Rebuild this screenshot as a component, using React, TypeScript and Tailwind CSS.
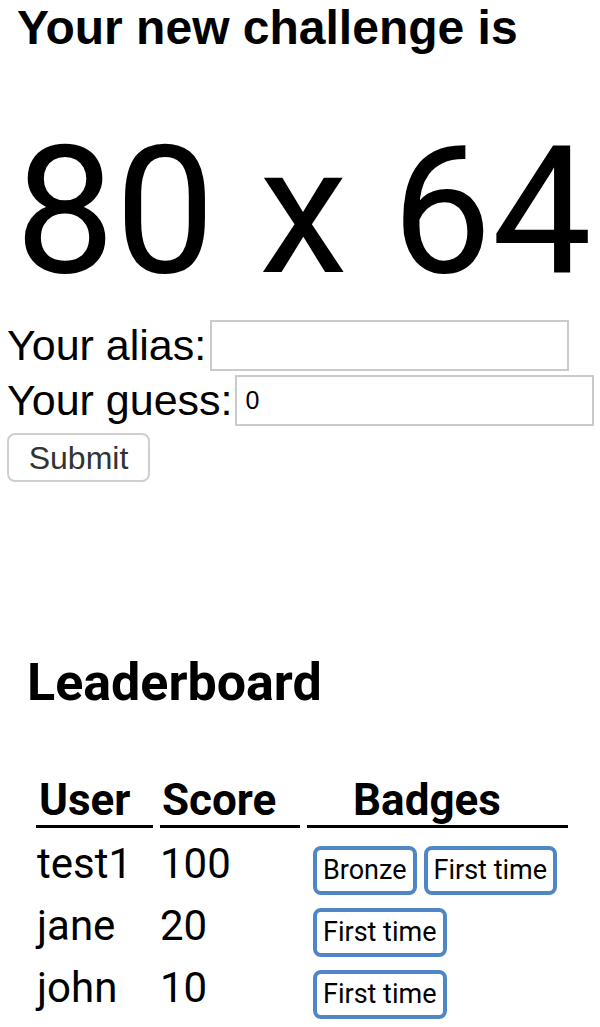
import React from 'react';

const roboto = { fontFamily: 'Roboto, "Liberation Sans", sans-serif' };

const leaders = [
  { user: 'test1', score: 100, badges: ['Bronze', 'First time'] },
  { user: 'jane', score: 20, badges: ['First time'] },
  { user: 'john', score: 10, badges: ['First time'] },
];

export default function App() {
  return (
    <div className="w-[600px] h-[1027px] bg-white text-black overflow-hidden font-['Roboto',sans-serif]">
      <h3 className="pt-1 pl-[17px] text-[48px] leading-[48px] font-bold font-['Liberation_Sans',Arial,sans-serif] whitespace-nowrap">
        Your new challenge is
      </h3>

      <div className="mt-[70px] pl-[15px] text-[178px] leading-[178px] font-normal whitespace-nowrap">80 x 64</div>

      {/* guess form */}
      <form className="mt-[20px] pl-[7px] font-['Liberation_Sans',Arial,sans-serif]" onSubmit={(e) => e.preventDefault()}>
        <div className="flex items-center h-[51px]">
          <label className="text-[43px] leading-none">Your alias:</label>
          <input type="text" className="ml-[4px] w-[359px] h-[51px] border-2 border-[#cacaca] bg-white px-2 text-[24px] outline-none" />
        </div>
        <div className="flex items-center h-[51px] mt-[4px]">
          <label className="text-[43px] leading-none">Your guess:</label>
          <input type="text" defaultValue="0" className="ml-[2px] w-[359px] h-[51px] border-2 border-[#cacaca] bg-white pl-[9px] text-[25px] outline-none" />
        </div>
        <button type="submit" className="mt-[7px] w-[143px] h-[49px] rounded-lg border-2 border-[#cfcfcf] bg-white text-[32px] leading-none text-[#333]">
          Submit
        </button>
      </form>

      {/* leaderboard */}
      <div className="mt-[175px]" style={roboto}>
        <h3 className="pl-[27px] text-[52px] leading-[52px] font-bold">Leaderboard</h3>
        <table className="mt-[69px] ml-[29px] border-separate border-spacing-x-[7px] border-spacing-y-0">
          <thead>
            <tr className="text-[44px] leading-[44px] font-bold">
              <th className="w-[117px] text-left pl-[3px] pb-[3px] border-b-[3px] border-black">User</th>
              <th className="w-[140px] text-left pl-[2px] pb-[3px] border-b-[3px] border-black">Score</th>
              <th className="w-[261px] text-left pl-[46px] pb-[3px] border-b-[3px] border-black">Badges</th>
            </tr>
          </thead>
          <tbody>
            {leaders.map((row, i) => (
              <tr key={row.user} className="text-[42px] leading-[42px]">
                <td className={`align-top pl-[1px] ${i === 0 ? 'pt-[15px]' : 'pt-[9px]'}`}>{row.user}</td>
                <td className={`align-top ${i === 0 ? 'pt-[15px]' : 'pt-[9px]'}`}>{row.score}</td>
                <td className={`align-top pl-[6px] pb-[1px] ${i === 0 ? 'pt-[18px]' : 'pt-[12px]'}`}>
                  <div className="flex gap-[7px]">
                    {row.badges.map((b) => (
                      <span key={b} className="h-[49px] px-[6px] flex items-center border-4 border-[#4f86c6] rounded-lg text-[27px] leading-none">
                        {b}
                      </span>
                    ))}
                  </div>
                </td>
              </tr>
            ))}
          </tbody>
        </table>
      </div>
    </div>
  );
}
